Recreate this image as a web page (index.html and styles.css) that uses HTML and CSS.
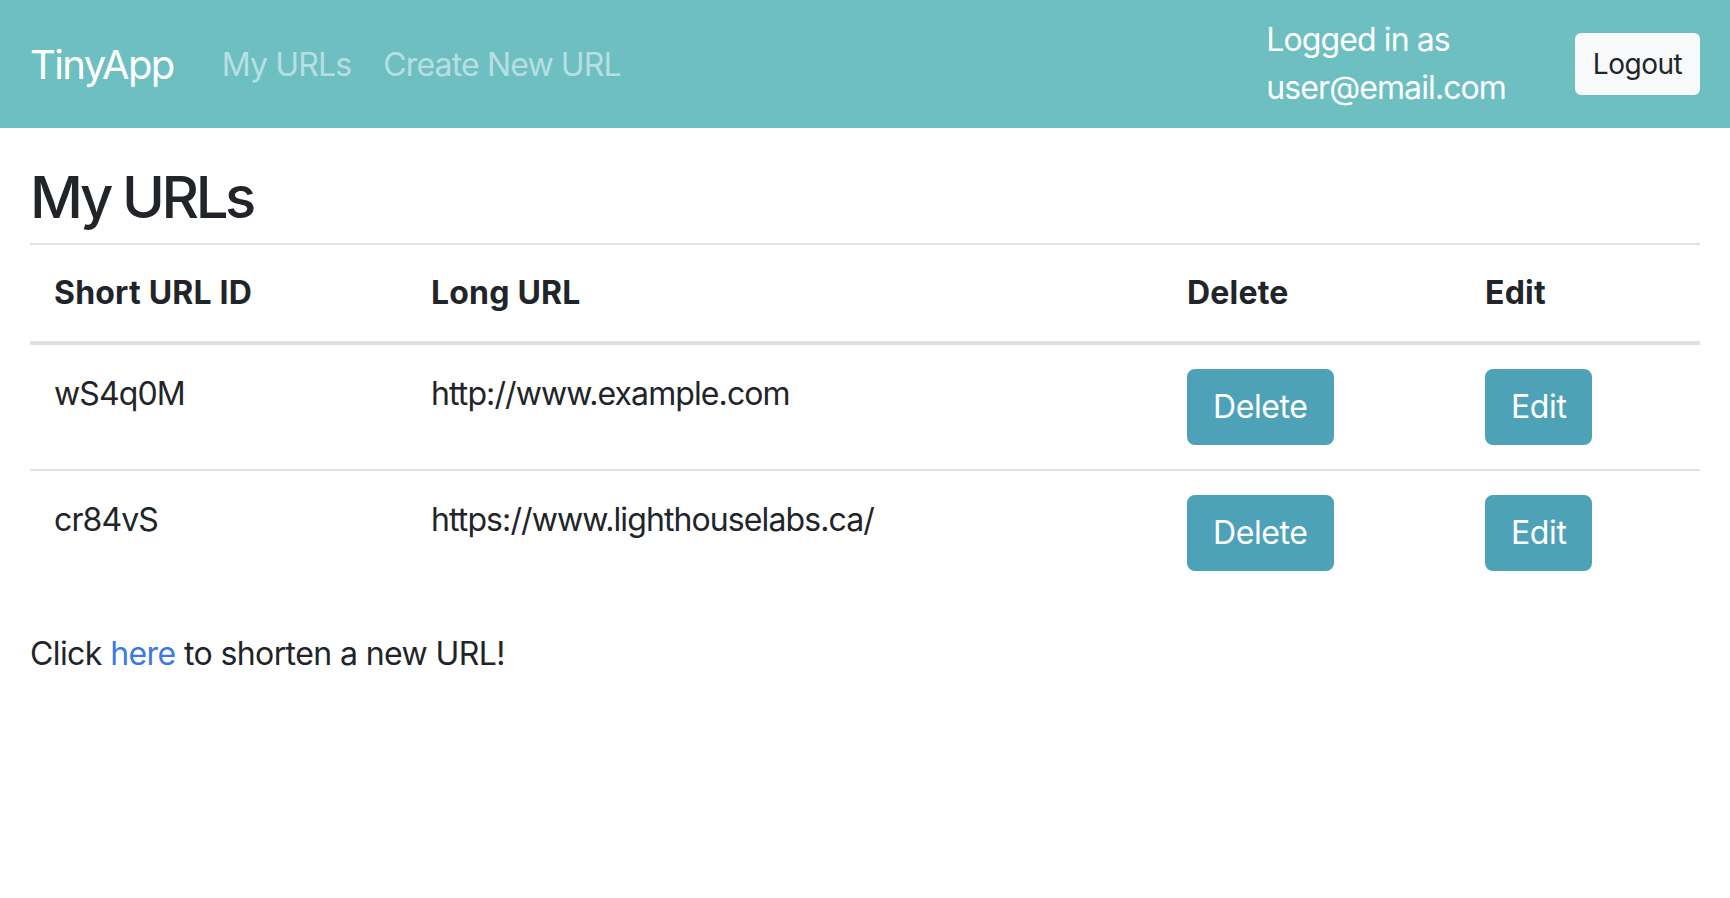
FILE: index.html
```html
<!DOCTYPE html>
<html lang="en">
<head>
<meta charset="utf-8">
<title>TinyApp</title>
<link rel="stylesheet" href="styles.css">
</head>
<body>
<nav class="navbar">
  <a class="brand" href="#">TinyApp</a>
  <div class="nav-links">
    <a class="nav-link" href="#">My URLs</a>
    <a class="nav-link" href="#">Create New URL</a>
  </div>
  <div class="nav-right">
    <span class="login-text">Logged in as<br>user@email.com</span>
    <button class="btn-logout">Logout</button>
  </div>
</nav>
<main class="main">
  <h1 class="title">My URLs</h1>
  <table class="table">
    <colgroup>
      <col class="col-short">
      <col class="col-long">
      <col class="col-del">
      <col class="col-edit">
    </colgroup>
    <thead>
      <tr>
        <th>Short URL ID</th>
        <th>Long URL</th>
        <th>Delete</th>
        <th>Edit</th>
      </tr>
    </thead>
    <tbody>
      <tr>
        <td>wS4q0M</td>
        <td>http://www.example.com</td>
        <td><button class="btn-info">Delete</button></td>
        <td><button class="btn-info">Edit</button></td>
      </tr>
      <tr>
        <td>cr84vS</td>
        <td>https://www.lighthouselabs.ca/</td>
        <td><button class="btn-info">Delete</button></td>
        <td><button class="btn-info">Edit</button></td>
      </tr>
    </tbody>
  </table>
  <p class="cta">Click <a class="link" href="#">here</a> to shorten a new URL!</p>
</main>
</body>
</html>
```

FILE: styles.css
```css
* { box-sizing: border-box; }
html, body {
  margin: 0;
  padding: 0;
  background: #ffffff;
}
body {
  font-family: Inter, "Liberation Sans", sans-serif;
  font-size: 32px;
  line-height: 48px;
  color: #212529;
  letter-spacing: -0.9px;
}
.navbar {
  display: flex;
  align-items: center;
  height: 128px;
  padding: 0 30px;
  background: #6ebfc2;
}
.brand {
  font-size: 40px;
  line-height: 60px;
  color: #ffffff;
  text-decoration: none;
  margin-right: 32px;
  letter-spacing: -1.6px;
  margin-top: 2px;
}
.nav-links {
  display: flex;
  flex: 1;
  margin-top: 2px;
}
.nav-link {
  color: #b7dfe1;
  text-decoration: none;
  padding: 0 16px;
  letter-spacing: -0.85px;
}
.nav-right {
  display: flex;
  align-items: center;
}
.login-text {
  color: #ffffff;
  margin-right: 69px;
  letter-spacing: -0.9px;
}
.btn-logout {
  font-family: inherit;
  font-size: 28px;
  line-height: 42px;
  height: 62px;
  width: 125px;
  padding: 0;
  background: #f8f9fa;
  color: #212529;
  border: 2px solid #f8f9fa;
  border-radius: 6px;
  letter-spacing: -0.5px;
}
.main {
  padding: 0 30px;
}
.title {
  margin: 21px 0 0;
  font-size: 58px;
  line-height: 96px;
  height: 94px;
  font-weight: 500;
  letter-spacing: -3.4px;
}
.table {
  width: 100%;
  table-layout: fixed;
  border-collapse: collapse;
  margin-bottom: 35px;
}
.col-short { width: 377px; }
.col-long { width: 756px; }
.col-del { width: 298px; }
.table th, .table td {
  text-align: left;
  vertical-align: top;
  padding: 24px;
  border-top: 2px solid #dee2e6;
}
.table th {
  font-weight: 700;
  vertical-align: bottom;
  letter-spacing: 0.2px;
  border-bottom: 4px solid #dee2e6;
}
.table td {
  padding-top: 25px;
}
.btn-info {
  font-family: inherit;
  font-size: 32px;
  line-height: 48px;
  height: 76px;
  padding: 0 24px;
  margin-top: -1px;
  color: #ffffff;
  background: #4ea2b8;
  border: 2px solid #4ea2b8;
  border-radius: 8px;
  letter-spacing: -0.4px;
}
.cta {
  margin: 0;
  letter-spacing: -0.6px;
}
.link {
  color: #3a7be0;
  text-decoration: none;
}
```
